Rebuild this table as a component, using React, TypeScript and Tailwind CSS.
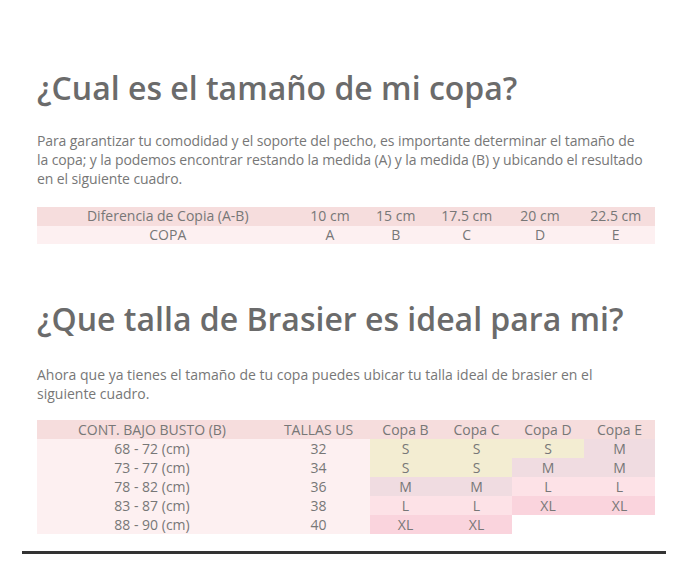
const font = { fontFamily: '"Open Sans", "Liberation Sans", sans-serif' };

const cupRows = [
  ["Diferencia de Copia (A-B)", "10 cm", "15 cm", "17.5 cm", "20 cm", "22.5 cm"],
  ["COPA", "A", "B", "C", "D", "E"],
];

// cell colours
const Y = "bg-[#f3edd2]";
const M = "bg-[#f0dce1]";
const L = "bg-[#fde2e7]";
const XL = "bg-[#fad4dd]";
const EMPTY = "bg-white";

const sizeRows: { busto: string; us: string; cells: [string, string][] }[] = [
  { busto: "68 - 72 (cm)", us: "32", cells: [["S", Y], ["S", Y], ["S", Y], ["M", M]] },
  { busto: "73 - 77 (cm)", us: "34", cells: [["S", Y], ["S", Y], ["M", M], ["M", M]] },
  { busto: "78 - 82 (cm)", us: "36", cells: [["M", M], ["M", M], ["L", L], ["L", L]] },
  { busto: "83 - 87 (cm)", us: "38", cells: [["L", L], ["L", L], ["XL", XL], ["XL", XL]] },
  { busto: "88 - 90 (cm)", us: "40", cells: [["XL", XL], ["XL", XL], ["", EMPTY], ["", EMPTY]] },
];

export default function App() {
  return (
    <div className="w-[688px] h-[586px] bg-white text-[#777]" style={font}>
      <div className="mx-[22px] pt-[66px]">
        <div className="px-[15px]">
          {/* cup size */}
          <h2 className="text-[32px] leading-[44px] font-semibold text-[#6b6b6b]">
            ¿Cual es el tamaño de mi copa?
          </h2>
          <p className="mt-[21px] text-[14px] leading-[19px] whitespace-nowrap tracking-[-0.1px]">
            Para garantizar tu comodidad y el soporte del pecho, es importante determinar el tamaño de
            <br />
            la copa; y la podemos encontrar restando la medida (A) y la medida (B) y ubicando el resultado
            <br />
            en el siguiente cuadro.
          </p>

          <div className="mt-[19px] grid grid-cols-[261.5px_63px_68.5px_73.5px_73px_78.5px] text-[14px] leading-[18.5px] text-center">
            {cupRows[0].map((c, i) => (
              <div key={"h" + i} className="bg-[#f6dddd]">{c}</div>
            ))}
            {cupRows[1].map((c, i) => (
              <div key={"r" + i} className="bg-[#fdf0f1]">{c}</div>
            ))}
          </div>

          {/* bra size */}
          <h2 className="mt-[53px] text-[32px] leading-[44px] font-semibold text-[#6b6b6b]">
            ¿Que talla de Brasier es ideal para mi?
          </h2>
          <p className="mt-[24px] text-[14px] leading-[19px]">
            Ahora que ya tienes el tamaño de tu copa puedes ubicar tu talla ideal de brasier en el
            <br />
            siguiente cuadro.
          </p>

          <div className="mt-[17px] grid grid-cols-[230px_103px_71px_71px_72px_71px] text-[14px] leading-[19px] text-center">
            {["CONT. BAJO BUSTO (B)", "TALLAS US", "Copa B", "Copa C", "Copa D", "Copa E"].map((c) => (
              <div key={c} className="bg-[#f6dddd]">{c}</div>
            ))}
            {sizeRows.map((r) => (
              <div key={r.busto} className="contents">
                <div className="bg-[#fdf0f1]">{r.busto}</div>
                <div className="bg-[#fdf0f1]">{r.us}</div>
                {r.cells.map(([t, bg], i) => (
                  <div key={i} className={bg}>{t}</div>
                ))}
              </div>
            ))}
          </div>
        </div>

        <div className="mt-[17px] h-[3px] bg-[#333]" />
      </div>
    </div>
  );
}
